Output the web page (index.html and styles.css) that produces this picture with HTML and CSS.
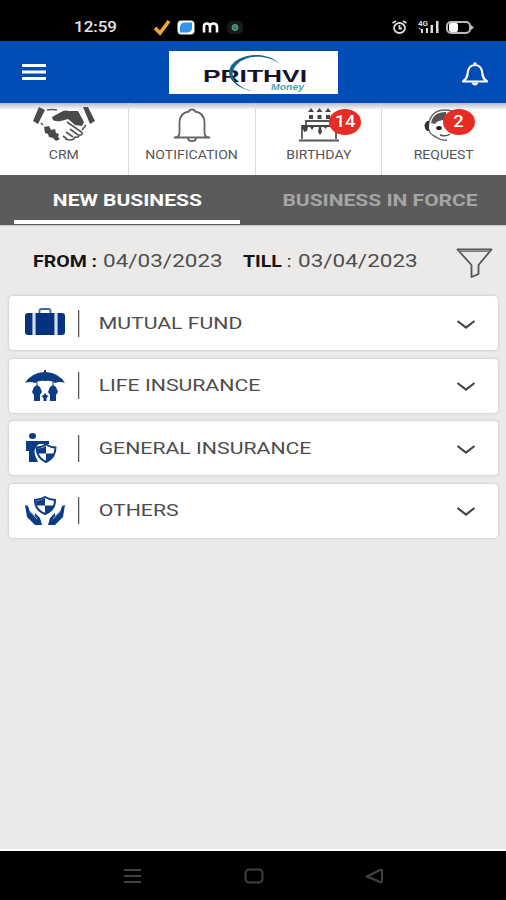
FILE: index.html
```
<!DOCTYPE html>
<html lang="en">
<head>
  <meta charset="UTF-8">
  <meta name="viewport" content="width=device-width, initial-scale=1.0">
  <title>Prithvi Money</title>
  <link rel="stylesheet" href="styles.css">
</head>
<body>
  <div class="status-bar">
    <span class="time"><span class="wide">12:59</span></span>
    <svg class="status-apps" width="94" height="18" viewBox="0 0 94 18">
      <path d="M3 10l5 5L17 3" fill="none" stroke="#f2a638" stroke-width="3.6"/>
      <rect x="25.500" y="2.500" width="17" height="14" rx="4" fill="#fff"/>
      <path d="M28 8.500q1-4 5-4h7v6q-1 4-5 4h-7z" fill="#2f94e6"/>
      <path d="M52 14.500V8.500q0-3 2.700-3t3.300 3v6V8.500q0-3 3.300-3t3.700 3v6" fill="none" stroke="#fff" stroke-width="2.600"/>
      <rect x="75" y="3" width="16" height="13" rx="5" fill="#151c1e"/>
      <circle cx="83" cy="9.500" r="3" fill="#3f7a67" stroke="#65a28c"/>
    </svg>
    <svg class="status-system" width="86" height="18" viewBox="0 0 86 18">
      <g fill="none" stroke="#ddd" stroke-width="1.800">
        <ellipse cx="9.500" cy="10" rx="5.500" ry="5"/>
        <path d="M2.500 5l3.500-2M16.500 5L13 3M9.500 7v3.500h2.500"/>
      </g>
      <text x="28" y="8" class="network">4G</text>
      <path d="M31 11h2v4h-2zM36 10h2v5h-2zM40.500 7H43v8h-2.500zM46 3h2.500v12H46zM28 9l3 2-1 1z" fill="#ddd"/>
      <rect x="57" y="4" width="23" height="11" rx="4" fill="none" stroke="#bbb" stroke-width="2"/>
      <rect x="59" y="5" width="9" height="9" rx="2" fill="#fff"/>
      <path d="M81 7l3 2.500-3 2.500z" fill="#bbb"/>
    </svg>
  </div>

  <header class="app-bar">
    <svg class="menu" width="24" height="18" viewBox="0 0 24 18">
      <path d="M0 2.500h24M0 9h24M0 15.500h24" stroke="#fff" stroke-width="3.200"/>
    </svg>
    <svg class="logo" width="169" height="43" viewBox="0 0 169 43">
      <rect width="169" height="43" fill="#fff"/>
      <text x="34" y="30.500" class="logo-name" textLength="104" lengthAdjust="spacingAndGlyphs">PRITHVI</text>
      <path d="M84 40.500C67 37 57 27 61 17 65 5 94-3 111 13 96 2 74 4 66 16c-7 10 2 20 18 24.500z" fill="#17638e"/>
      <text x="102" y="39" class="logo-sub" textLength="33" lengthAdjust="spacingAndGlyphs">Money</text>
    </svg>
    <svg class="bell" width="28" height="26" viewBox="0 0 28 26">
      <path d="M2 20.500q4-3 4.500-7Q7 4 14 4t7.500 9.500q.5 4 4.500 7z" fill="none" stroke="#fff" stroke-width="2.200" stroke-linejoin="round"/>
      <path d="M12.500 3V1.500h3V3zM10.500 21.500h7q-1 3-3.500 3t-3.500-3z" fill="#fff"/>
    </svg>
  </header>

  <nav class="shortcuts">
    <a class="shortcut">
      <svg width="64" height="37" viewBox="0 0 64 37">
        <path d="M7 0l6 3-7 14-5-3zM51 0h5l7 14-5 3zM20 10l11-6q3-1 6 0l9 0 6 11-2 4-7-1-7-6-7 2q-5 1-8-1z" fill="#4a4a4a"/>
        <path d="M15 3q5-1 10 0M9 16l2 2M35 15l13 9q4 3 1 4l-2 0q0 3-4 2-1 3-5 3l-5-1M38 22l8 6M34 25l7 5M31 29l4 3M54 18l-4 5" fill="none" stroke="#555" stroke-width="1.600"/>
        <path d="M12 20l5-1 2 4 4-1 1 4 3 1-1 3 2 2-4 2-3-3-4-1-1-3-3-1z" fill="#4a4a4a"/>
      </svg>
      <span class="shortcut-label">CRM</span>
    </a>
    <a class="shortcut">
      <svg width="38" height="37" viewBox="0 0 38 37">
        <path d="M1.500 30.500q5 0 5-5v-10Q7 5.500 16 4.500q0-2 3-2t3 2q9 1 9.500 11v10q0 5 5 5zM15 31q0 3 4 3t4-3" fill="none" stroke="#666" stroke-width="1.800" stroke-linejoin="round"/>
      </svg>
      <span class="shortcut-label">NOTIFICATION</span>
    </a>
    <a class="shortcut">
      <svg width="42" height="37" viewBox="0 0 42 37">
        <path d="M1 33.500h40M4 32V19h34v13M8 18v-4h26v4" fill="none" stroke="#555" stroke-width="1.800"/>
        <path d="M4 18h34v2h-9l-1 2-2-2h-3l1 5-2 3-2-3 1-5h-5l-2 3-2-3h-2l-1 4-3 1-1-3H4zM11 8h4v4h-4zM19.500 8h4v4h-4zM28 8h4v4h-4zM13 1l3 4h-6zM21.500 1l3 4h-6zM30 1l3 4h-6z" fill="#444"/>
      </svg>
      <span class="badge"><b>14</b></span>
      <span class="shortcut-label">BIRTHDAY</span>
    </a>
    <a class="shortcut">
      <svg width="42" height="37" viewBox="0 0 42 37">
        <path d="M5 20Q7 3 22 3t15 14M5 20q1 7 8 10 5 4 11 3" fill="none" stroke="#666" stroke-width="1.500"/>
        <path d="M8 16Q10 5 23 5v8q-9 0-11 4z" fill="#555"/>
        <path d="M4 14q-5 5 0 10l2 0V14z" fill="#333"/>
        <ellipse cx="16" cy="21" rx="2.800" ry="2" fill="#222"/>
        <path d="M17 28q6 2 10-1" fill="none" stroke="#555" stroke-width="1.500"/>
      </svg>
      <span class="badge badge-request"><b>2</b></span>
      <span class="shortcut-label">REQUEST</span>
    </a>
  </nav>

  <div class="tabs">
    <div class="tab active"><span>NEW BUSINESS</span></div>
    <div class="tab"><span>BUSINESS IN FORCE</span></div>
  </div>

  <main>
    <div class="filter-row">
      <div class="field from"><span class="caption">FROM :</span></div>
      <div class="field date"><span class="value">04/03/2023</span></div>
      <div class="field till"><span class="caption">TILL <i>:</i></span></div>
      <div class="field date"><span class="value">03/04/2023</span></div>
      <svg class="funnel" width="37" height="32" viewBox="0 0 37 32">
        <path d="M1.500 2.500h34L22.500 18v9l-7 3V18z" fill="none" stroke="#555" stroke-width="1.800" stroke-linejoin="round"/>
        <path d="M3 4.500h31" stroke="#777"/>
      </svg>
    </div>

    <div class="cards">
      <div class="card">
        <svg class="card-icon" width="40" height="32" viewBox="0 0 40 32">
          <path d="M14.500 6V4q0-2 2-2h7q2 0 2 2v2" fill="none" stroke="#456a96" stroke-width="1.800"/>
          <path d="M10.500 6h19v22h-19zM3 6h4.500v22H3q-3 0-3-3V9q0-3 3-3zM32.500 6H37q3 0 3 3v16q0 3-3 3h-4.500z" fill="#05317f"/>
          <path d="M9 6v22M31 6v22" stroke="#a9bbd9"/>
        </svg>
        <span class="card-title">MUTUAL FUND</span>
        <svg class="chevron" width="20" height="12" viewBox="0 0 20 12"><path d="M1.500 2l8.500 6.500L18.500 2"/></svg>
      </div>
      <div class="card">
        <svg class="card-icon" width="40" height="32" viewBox="0 0 40 32">
          <path d="M19 2V0h2v2q13 1 19 11-5-2-10 0-4-3-10-2-6-1-10 2-5-2-10 0Q6 3 19 2z" fill="#0b3c84"/>
          <path d="M12 12v4M28 12v4" stroke="#0b3c84"/>
          <path d="M12 15l3 2 2 5-2 3v6H9v-6l-2-3 2-5zM28 15l3 2 2 5-2 3v6h-6v-6l-2-3 2-5zM20 23l1.500 2 2 1-2 2v3h-3v-3l-2-2 2-1z" fill="#0b3c84"/>
        </svg>
        <span class="card-title">LIFE INSURANCE</span>
        <svg class="chevron" width="20" height="12" viewBox="0 0 20 12"><path d="M1.500 2l8.500 6.500L18.500 2"/></svg>
      </div>
      <div class="card">
        <svg class="card-icon" width="40" height="32" viewBox="0 0 40 32">
          <ellipse cx="7.500" cy="4" rx="3.500" ry="3" fill="#0b3c84"/>
          <path d="M1 9h23v3H14q-6 4-4 11l3 7H4V19H1z" fill="#0b3c84"/>
          <path d="M21 12.500q5 3 9.500 3 0 10-9.500 14.500-9.500-4.500-9.500-14.500 4.500 0 9.500-3z" fill="#fff" stroke="#0b3c84" stroke-width="2"/>
          <path d="M21 14v7.500h-8.500l-.5-5q5 0 9-2.500zM21 21.500h8.500q-1 5-8.500 8z" fill="#0b3c84"/>
        </svg>
        <span class="card-title">GENERAL INSURANCE</span>
        <svg class="chevron" width="20" height="12" viewBox="0 0 20 12"><path d="M1.500 2l8.500 6.500L18.500 2"/></svg>
      </div>
      <div class="card">
        <svg class="card-icon" width="40" height="32" viewBox="0 0 40 32">
          <path d="M20 2q5 3 10 3 0 10-10 14Q10 15 10 5q5 0 10-3z" fill="#fff" stroke="#0b3c84" stroke-width="2"/>
          <path d="M20 3v7.500h-8.500L11 6q5 0 9-3zM20 10.500h9q-1 5-9 8z" fill="#0b3c84"/>
          <path d="M0 10l3 1 2 6 5 4v-3l5 5 2 7h-7l-8-8zM40 10l-3 1-2 6-5 4v-3l-5 5-2 7h7l8-8z" fill="#0b3c84"/>
          <path d="M5 16l7 8M35 16l-7 8" stroke="#a9bbd9"/>
        </svg>
        <span class="card-title">OTHERS</span>
        <svg class="chevron" width="20" height="12" viewBox="0 0 20 12"><path d="M1.500 2l8.500 6.500L18.500 2"/></svg>
      </div>
    </div>
  </main>

  <footer class="system-nav">
    <svg width="20" height="18" viewBox="0 0 20 18"><path d="M1 3h17M1 9h17M1 15h17"/></svg>
    <svg width="20" height="18" viewBox="0 0 20 18"><rect x="1.500" y="2.500" width="17" height="13" rx="4"/></svg>
    <svg width="20" height="18" viewBox="0 0 20 18"><path d="M2 9.500L15 3q2-1 2 1v10q0 2-2 1z"/></svg>
  </footer>
</body>
</html>
```

FILE: styles.css
```
* {
  box-sizing: border-box;
}

body {
  margin: 0;
  height: 900px;
  display: flex;
  flex-direction: column;
  overflow: hidden;
  font-family: Roboto, Arial, sans-serif;
  background-color: #ebeae9;
}

svg {
  display: block;
  flex: none;
}

.status-bar {
  height: 41px;
  padding: 12px 30px 0 74px;
  display: flex;
  background-color: #000;
  color: #e4e4e4;
}

.time {
  width: 78px;
  font-size: 15px;
  line-height: 30px;
}

.wide {
  display: inline-block;
  font-weight: 500;
  transform: scaleX(1.13);
  transform-origin: left;
}

.status-apps {
  margin-top: 6px;
}

.status-system {
  margin: 6px 0 0 auto;
}

.network {
  font-size: 8px;
  font-weight: bold;
  fill: #ddd;
}

.app-bar {
  height: 62px;
  padding: 0 17px 0 22px;
  display: flex;
  align-items: center;
  justify-content: space-between;
  background-color: #024cb8;
}

.logo {
  margin-right: 1px;
}

.bell {
  margin-top: 3px;
}

.logo-name {
  font-family: "Liberation Sans", Arial, sans-serif;
  font-size: 16.5px;
  font-weight: bold;
  fill: #14122f;
}

.logo-sub {
  font-family: "Liberation Sans", Arial, sans-serif;
  font-size: 9px;
  font-weight: bold;
  font-style: italic;
  fill: #4aa5b8;
}

.shortcuts {
  height: 72px;
  display: grid;
  grid-template-columns: 129px 127px 126px 124px;
  background: linear-gradient(#b4bcc4, #fff 7px);
}

.shortcut {
  position: relative;
  display: flex;
  flex-direction: column;
  align-items: center;
  padding-top: 4px;
  border-right: 1px solid #dcdcdc;
}

.shortcut:last-child {
  border-right: none;
}

.shortcut-label {
  margin-top: 4px;
  font-size: 12px;
  line-height: 15px;
  color: #555;
  transform: scaleX(1.17);
}

.badge {
  position: absolute;
  left: 73px;
  top: 6px;
  width: 32px;
  height: 26px;
  border-radius: 50%;
  background-color: #e62c24;
  color: #fff;
  font-size: 16px;
  line-height: 26px;
  text-align: center;
}

.badge-request {
  left: 61px;
}

.badge b {
  display: inline-block;
  font-weight: 500;
  transform: scaleX(1.15);
}

.tabs {
  height: 51px;
  display: grid;
  grid-template-columns: 1fr 1fr;
  background-color: #5b5b5b;
  border-bottom: 1px solid #c8c8c8;
}

.tab {
  margin: 0 13px 1px 14px;
  padding-top: 13px;
  border-bottom: 4px solid transparent;
  text-align: center;
  color: #a5a5a5;
  font-size: 17px;
  line-height: 24px;
  font-weight: bold;
  white-space: nowrap;
}

.tab.active {
  color: #fff;
  border-bottom-color: #fff;
}

.tab span {
  display: inline-block;
  transform: scaleX(1.235);
}

main {
  flex: 1;
  border-bottom: 2px solid #fff;
}

.filter-row {
  height: 70px;
  padding: 0 12px 0 33px;
  display: flex;
  align-items: center;
}

.field {
  white-space: nowrap;
}

.from {
  width: 70px;
}

.date {
  width: 140px;
}

.till {
  width: 55px;
}

.caption,
.value {
  display: inline-block;
  transform-origin: left;
  transform: scaleX(1.22);
}

.caption {
  font-size: 16px;
  font-weight: bold;
  color: #151515;
}

.caption i {
  font-style: normal;
  font-weight: normal;
}

.value {
  margin-left: -0.5px;
  font-size: 18px;
  line-height: 20px;
  color: #4e4e4e;
  transform: scaleX(1.25);
}

.funnel {
  margin: 4px 1px 0 auto;
}

.cards {
  padding: 0 8px 0 9px;
  display: grid;
  gap: 8.5px;
}

.card {
  height: 54px;
  padding: 0 22px 0 16px;
  display: flex;
  align-items: center;
  background-color: #fff;
  border-radius: 4px;
  box-shadow: 0 0 3px rgba(0, 0, 0, 0.2);
}

.card-title {
  margin-left: 13px;
  display: flex;
  align-items: center;
  font-size: 17px;
  line-height: 27px;
  color: #4c4c4c;
  white-space: nowrap;
  transform: scaleX(1.25);
  transform-origin: left;
}

/* divider between the icon and the title */
.card-title::before {
  content: "";
  width: 1px;
  height: 27px;
  margin-right: 15.5px;
  background-color: #555;
}

.chevron {
  margin: 3px 0 0 auto;
}

.chevron path {
  fill: none;
  stroke: #454545;
  stroke-width: 2.2;
}

.system-nav {
  height: 49px;
  padding: 0 121px 0 123px;
  display: flex;
  align-items: center;
  justify-content: space-between;
  background-color: #000;
}

.system-nav svg {
  fill: none;
  stroke: #424242;
  stroke-width: 2;
}
```
